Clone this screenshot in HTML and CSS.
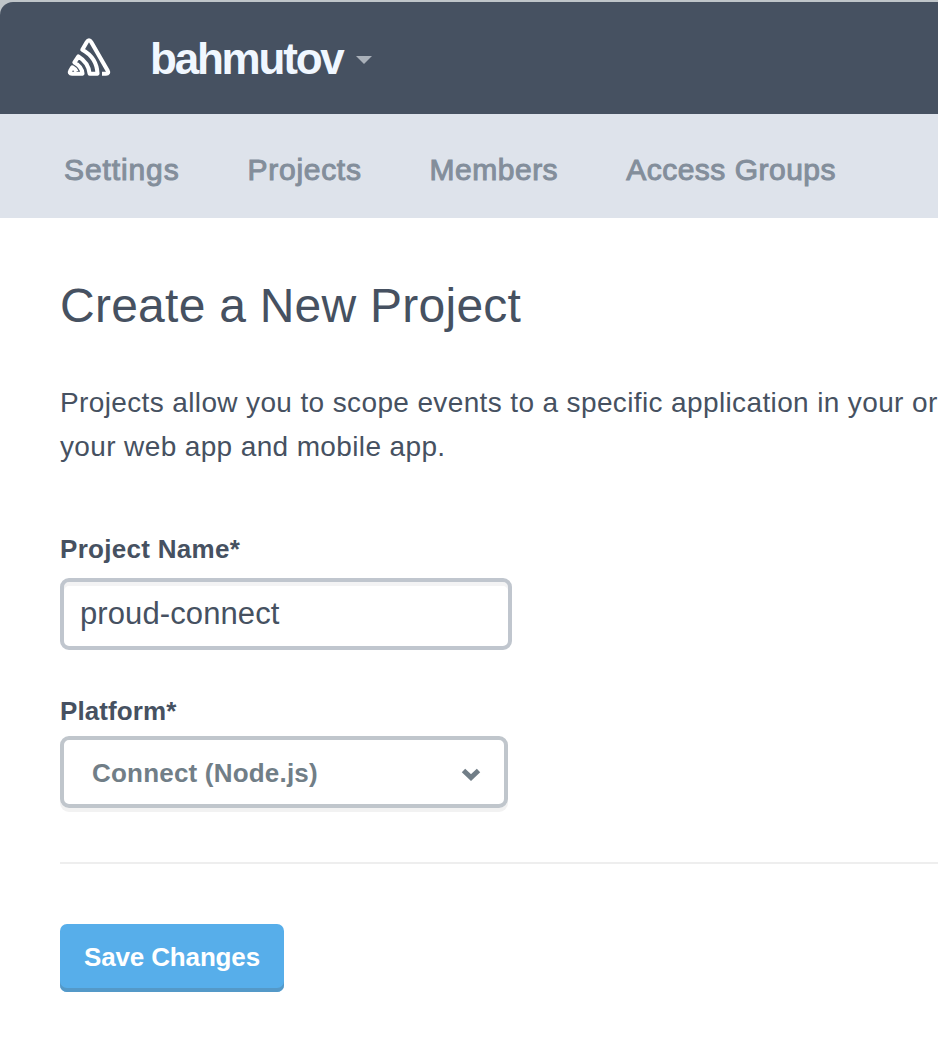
FILE: index.html
```html
<!DOCTYPE html>
<html lang="en">
<head>
<meta charset="utf-8">
<title>Create a New Project</title>
<link rel="stylesheet" href="styles.css">
</head>
<body>
<div class="frame">
<header class="topbar">
<svg class="logo" width="44" height="40" viewBox="0 0 44 40" fill="none" stroke="#fff" stroke-width="4.1" stroke-linejoin="round">
<path d="M35 35.700 H39 Q42.300 35.700 40.600 32.600 L24.200 4 Q22 .400 19.800 4 L15.300 11.800 C24 16.500 30 25 30.500 35.700 H22.600 C22 28.500 18 22.500 11.400 18.500 L7.400 24.500 C12 27 15.200 31 15.500 35.700 H5 Q1.700 35.700 3.400 32.600 L5.300 29.300 Q8.500 31 9.500 33.500"/>
</svg>
<span class="org">bahmutov</span><span class="caret"></span>
</header>
</div>
<nav class="tabs"><a class="tab settings">Settings</a><a class="tab">Projects</a><a class="tab snug">Members</a><a class="tab snug">Access Groups</a></nav>
<main class="content">
<h1 class="title">Create a New Project</h1>
<p class="intro">Projects allow you to scope events to a specific application in your or<br>your web app and mobile app.</p>
<form class="form">
<label class="label name-label">Project Name*</label>
<div class="input">proud-connect</div>
<label class="label platform-label">Platform*</label>
<div class="select"><span>Connect (Node.js)</span><svg class="chevron" width="20" height="14" viewBox="0 0 20 14" fill="none" stroke="#717e87" stroke-width="5"><path d="M2.500 2.500 L10 9.500 L17.500 2.500"/></svg></div>
<div class="actions"><button class="save" type="button">Save Changes</button></div>
</form>
</main>
</body>
</html>
```
FILE: styles.css
```css
* { box-sizing: border-box; }
html { background: #fff; }
body { margin: 0; width: 938px; height: 1052px; overflow: hidden; font-family: "Liberation Sans", Arial, sans-serif; color: #465161; background: #fff; }
.frame { padding-top: 2px; background: #bfc5c9; }
.topbar { height: 112px; display: flex; align-items: center; padding: 2px 0 0 67px; background: #465161; border-top-left-radius: 13px; }
.logo { margin: 0 39px 2px 0; }
.org { font-size: 44px; font-weight: 700; letter-spacing: -2.2px; line-height: 50px; color: #f0f7ff; }
.caret { margin: 2px 0 0 13px; border: 8px solid transparent; border-top-color: #a9b0b9; border-bottom: 0; }
.tabs { height: 104px; display: flex; align-items: center; gap: 68px; padding: 8px 0 0 64px; background: #dee3eb; }
.tab { font-size: 30px; letter-spacing: .7px; -webkit-text-stroke: 1px #838e9b; color: #838e9b; white-space: nowrap; }
.tab.settings { letter-spacing: .9px; }
.tab.snug { letter-spacing: .5px; }
.content { padding: 58px 0 0 60px; }
.title { margin: 0; font-size: 48px; font-weight: 400; line-height: 60px; letter-spacing: .25px; }
.intro { margin: 45px 0 0; font-size: 28px; line-height: 44px; letter-spacing: .37px; white-space: nowrap; }
.form { margin-top: 63px; }
.label { display: block; font-size: 26px; font-weight: 700; line-height: 34px; }
.name-label { letter-spacing: .3px; }
.input { width: 452px; height: 72px; margin-top: 12px; padding: 0 16px; border: 4px solid #c0c6ce; border-radius: 9px; font-size: 31px; letter-spacing: .1px; line-height: 64px; box-shadow: inset 0 4px 0 #f3f3f4; }
.platform-label { margin-top: 44px; letter-spacing: .1px; }
.select { display: flex; align-items: center; justify-content: space-between; width: 448px; height: 72px; margin-top: 8px; padding: 2px 23px 0 28px; border: 4px solid #c0c6cc; border-radius: 9px; box-shadow: 0 4px 0 #f2f2f2; font-size: 26px; font-weight: 700; letter-spacing: .2px; color: #717e87; }
.chevron { margin-top: 4px; }
.actions { margin-top: 54px; padding-top: 60px; border-top: 2px solid #eee; }
.save { display: block; width: 224px; height: 68px; padding: 0 0 2px; border: 0; border-radius: 7px; background: #57aeea; box-shadow: inset 0 -4px 0 #5499c8; color: #fff; font: 700 26px "Liberation Sans", Arial, sans-serif; letter-spacing: -.15px; }
```
